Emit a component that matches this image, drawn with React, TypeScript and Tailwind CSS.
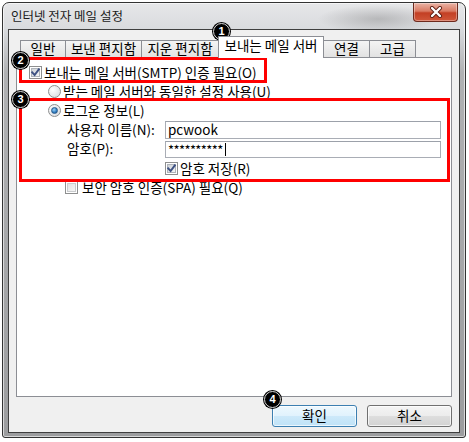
import React from "react";

function CheckBox({ checked, disabled }: { checked?: boolean; disabled?: boolean }) {
  return (
    <span className="relative flex w-[13px] h-[13px] shrink-0 items-center justify-center border border-[#8e8f8f] bg-white">
      <span
        className={
          disabled
            ? "block w-[9px] h-[9px] border border-[#c9cbcd] bg-[linear-gradient(135deg,#e2e2e2,#f7f7f7)]"
            : "block w-[9px] h-[9px] border border-[#aeb3b9] bg-[linear-gradient(135deg,#cdd1d6,#f5f6f7)]"
        }
      />
      {checked && (
        <svg className="absolute left-0 top-0" width="11" height="11" viewBox="0 0 11 11">
          <path d="M2.2 5.4 L4.6 8 L8.8 2.4" fill="none" stroke="#3f5283" strokeWidth="2" strokeLinecap="square" />
        </svg>
      )}
    </span>
  );
}

function Radio({ checked }: { checked?: boolean }) {
  return (
    <span className="flex w-[13px] h-[13px] shrink-0 items-center justify-center rounded-full border border-[#8e8f8f] bg-[radial-gradient(circle_at_35%_35%,#ffffff,#d4d7db)]">
      {checked && (
        <span className="block w-[7px] h-[7px] rounded-full border border-[#2a5a8a] bg-[radial-gradient(circle_at_40%_35%,#9fd3f5,#2e7cc0_60%,#1c4f82)]" />
      )}
    </span>
  );
}

function Badge({ n, className }: { n: string; className: string }) {
  return (
    <div className={"absolute w-[19px] h-[19px] rounded-full bg-black p-[1px] " + className}>
      <div className="w-full h-full rounded-full border border-[#d8d8d8] bg-black flex items-center justify-center text-white text-[11px] font-bold leading-none font-['Liberation_Sans',sans-serif]">
        {n}
      </div>
    </div>
  );
}

function Tab({ label, w, first }: { label: string; w: string; first?: boolean }) {
  return (
    <div
      className={
        "h-[18px] flex items-center justify-center border border-[#8c8e94] bg-[linear-gradient(to_bottom,#f4f4f4,#e2e2e2)] leading-none " +
        w +
        (first ? "" : " -ml-px")
      }
    >
      {label}
    </div>
  );
}

export default function App() {
  return (
    <div className="relative w-[469px] h-[442px] bg-white pl-[2px] pt-[2px] text-[13.5px] text-black font-['Noto_Sans_CJK_KR',sans-serif]">
      <div className="w-[464px] h-[436px] flex flex-col border border-[#333333] rounded-t-[7px] rounded-b-[3px] bg-[radial-gradient(ellipse_60px_14px_at_375px_16px,rgba(110,110,110,0.35),transparent),linear-gradient(to_bottom,#e6e7e9_0px,#d9dbde_26px,#b0b1b3_70px,#9c9d9f_100%)] shadow-[inset_0_0_0_1px_rgba(255,255,255,0.6)]">
        {/* title bar */}
        <div className="h-[26px] shrink-0 flex items-start justify-between">
          <span className="mt-[5px] ml-[8px] text-[12.5px] leading-[16px] text-[#1a1a1a]">
            인터넷 전자 메일 설정
          </span>
          <div className="mr-[7px] w-[45px] h-[19px] rounded-b-[4px] border border-t-0 border-[#6e2a1e] bg-[linear-gradient(to_bottom,#eab4a6_0%,#d97a63_45%,#c33f24_55%,#d0573a_100%)] shadow-[inset_0_0_0_1px_rgba(255,255,255,0.35)] flex items-center justify-center">
            <svg width="14" height="12" viewBox="0 0 14 12">
              <path d="M3 2 L11 10 M11 2 L3 10" stroke="#5a1a10" strokeWidth="4" strokeLinecap="round" />
              <path d="M3 2 L11 10 M11 2 L3 10" stroke="#ffffff" strokeWidth="2.4" strokeLinecap="round" />
            </svg>
          </div>
        </div>

        {/* client area */}
        <div className="mx-[5px] h-[404px] shrink-0 border border-[#3f3f3f] bg-[#f0f0f0] px-[7px] pt-[6px] flex flex-col">
          {/* tabs */}
          <div className="h-[22px] flex items-end pl-[4px]">
            <Tab label="일반" w="w-[46px]" first />
            <Tab label="보낸 편지함" w="w-[77px]" />
            <Tab label="지운 편지함" w="w-[78px]" />
            <div className="relative z-10 -ml-px h-[22px] w-[106px] flex items-center justify-center pb-[3px] border border-b-0 border-[#8c8e94] bg-white leading-none">
              보내는 메일 서버
            </div>
            <Tab label="연결" w="w-[47px]" />
            <Tab label="고급" w="w-[47px]" />
          </div>

          {/* panel */}
          <div className="-mt-px h-[340px] border border-[#8c8e94] bg-white pt-[5px] flex flex-col leading-none">
            <div className="h-[19px] flex items-center pl-[12px] gap-[2px]">
              <CheckBox checked />
              <span>보내는 메일 서버(SMTP) 인증 필요(O)</span>
            </div>
            <div className="h-[19px] flex items-center pl-[31px] gap-[2px]">
              <Radio />
              <span>받는 메일 서버와 동일한 설정 사용(U)</span>
            </div>
            <div className="h-[19px] flex items-center pl-[31px] gap-[2px]">
              <Radio checked />
              <span>로그온 정보(L)</span>
            </div>
            <div className="h-[19px] flex items-center pl-[50px]">
              <span className="w-[98px]">사용자 이름(N):</span>
              <div className="w-[276px] h-[18px] border border-[#a9adb5] border-t-[#9ca1aa] bg-white flex items-center pl-[2px]">
                pcwook
              </div>
            </div>
            <div className="h-[20px] flex items-center pl-[50px]">
              <span className="w-[98px]">암호(P):</span>
              <div className="w-[276px] h-[17px] border border-[#a9adb5] border-t-[#9ca1aa] bg-white flex items-center pl-[2px]">
                <span className="tracking-[-0.6px] text-[13px]">**********</span>
                <span className="ml-[2px] block w-px h-[13px] bg-black" />
              </div>
            </div>
            <div className="h-[19px] flex items-center pl-[148px] gap-[2px]">
              <CheckBox checked />
              <span>암호 저장(R)</span>
            </div>
            <div className="h-[19px] flex items-center pl-[48px] gap-[4px]">
              <CheckBox disabled />
              <span>보안 암호 인증(SPA) 필요(Q)</span>
            </div>
          </div>

          {/* buttons */}
          <div className="mt-[8px] h-[22px] flex justify-end gap-[10px] leading-none">
            <div className="w-[85px] h-[22px] rounded-[3px] border border-[#3c7fb1] bg-[linear-gradient(to_bottom,#eef8fe_0%,#e0f2fd_50%,#cde9fa_50%,#bfe2f7_100%)] shadow-[inset_0_0_0_1px_rgba(255,255,255,0.7)] flex items-center justify-center">
              확인
            </div>
            <div className="w-[85px] h-[22px] rounded-[3px] border border-[#707070] bg-[linear-gradient(to_bottom,#f4f4f4_0%,#ececec_50%,#dedede_50%,#d2d2d2_100%)] shadow-[inset_0_0_0_1px_rgba(255,255,255,0.7)] flex items-center justify-center">
              취소
            </div>
          </div>
        </div>
      </div>

      {/* annotation overlays */}
      <div className="absolute left-[19px] top-[57px] w-[248px] h-[26px] border-[3px] border-[#ff0000]" />
      <div className="absolute left-[19px] top-[98px] w-[431px] h-[84px] border-[3px] border-[#ff0000]" />
      <Badge n="1" className="left-[212px] top-[22px]" />
      <Badge n="2" className="left-[11px] top-[51px]" />
      <Badge n="3" className="left-[11px] top-[90px]" />
      <Badge n="4" className="left-[263px] top-[390px]" />
    </div>
  );
}
